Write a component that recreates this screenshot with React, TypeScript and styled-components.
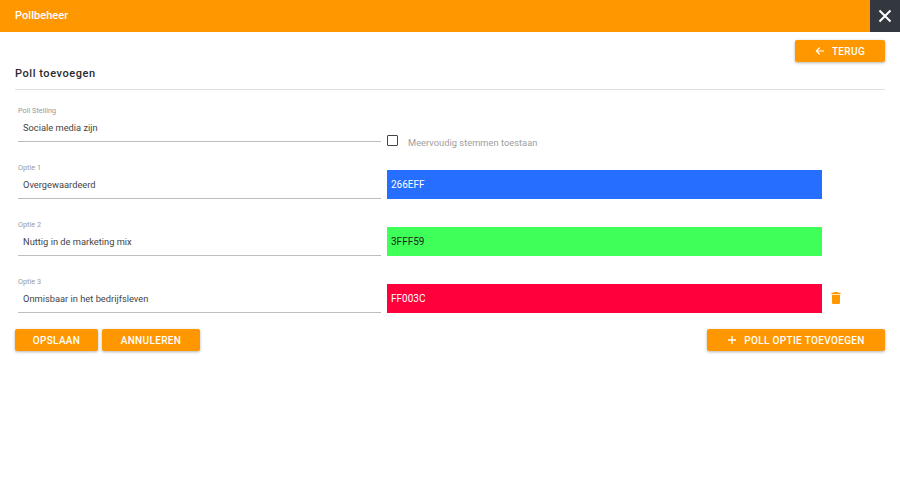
import React from "react";
import styled, { createGlobalStyle } from "styled-components";

const ORANGE = "#ff9800";

const OPTIONS = [
  { label: "Optie 1", value: "Overgewaardeerd", color: "#266EFF", ink: "#fff", hex: "266EFF" },
  { label: "Optie 2", value: "Nuttig in de marketing mix", color: "#3FFF59", ink: "#222", hex: "3FFF59" },
  { label: "Optie 3", value: "Onmisbaar in het bedrijfsleven", color: "#FF003C", ink: "#fff", hex: "FF003C", removable: true },
];

const GlobalStyle = createGlobalStyle`
  html, body {
    margin: 0;
    padding: 0;
    background: #fff;
    font-family: Roboto, "Liberation Sans", sans-serif;
  }
`;

const Page = styled.div`
  width: 900px;
  height: 497px;
  overflow: hidden;
`;

const TitleBar = styled.header`
  height: 32px;
  background: ${ORANGE};
  display: flex;
  align-items: center;
  justify-content: space-between;
`;

const AppTitle = styled.h1`
  margin: 0 0 1px 15px;
  font-size: 11px;
  font-weight: 500;
  letter-spacing: 0.05px;
  color: #fff;
`;

const CloseButton = styled.button`
  width: 30px;
  height: 32px;
  padding: 0;
  border: 0;
  background: #333840;
  display: flex;
  align-items: center;
  justify-content: center;
`;

const Content = styled.main`
  padding: 8px 15px 0;
`;

const TopActions = styled.div`
  display: flex;
  justify-content: flex-end;
`;

const Button = styled.button<{ $width: number }>`
  width: ${(p) => p.$width}px;
  height: 22px;
  padding: 0;
  border: 0;
  border-radius: 2px;
  background: ${ORANGE};
  color: #fff;
  font-family: inherit;
  font-size: 10px;
  font-weight: 500;
  letter-spacing: 0.35px;
  display: flex;
  align-items: center;
  justify-content: center;
  gap: 7px;
  box-shadow: 0 1px 3px rgba(0, 0, 0, 0.3);
`;

const Heading = styled.h2`
  margin: 4px 0 0;
  height: 23px;
  font-size: 11px;
  font-weight: 500;
  letter-spacing: 0.55px;
  line-height: 15px;
  color: #2b2b2b;
  border-bottom: 1px solid #e0e0e0;
`;

const Form = styled.section`
  display: flex;
  flex-direction: column;
  gap: 20px;
  padding-top: 15px;
`;

const Row = styled.div`
  display: flex;
  align-items: flex-end;
`;

const Field = styled.div`
  width: 363px;
  height: 35px;
  margin-left: 3px;
  padding-top: 1px;
  border-bottom: 1px solid #bdbdbd;
`;

const FieldLabel = styled.div`
  font-size: 7.3px;
  line-height: 9px;
  color: #9a9a9a;
`;

const FieldValue = styled.div`
  margin: 7px 0 0 5px;
  font-size: 9.3px;
  line-height: 12px;
  color: #444;
`;

const ColorSwatch = styled.div<{ $bg: string; $ink: string }>`
  width: 431px;
  height: 29px;
  padding-left: 4px;
  margin-left: 6px;
  background: ${(p) => p.$bg};
  color: ${(p) => p.$ink};
  font-size: 10px;
  line-height: 29px;
`;

const TrashButton = styled.button`
  border: 0;
  padding: 0;
  margin: 0 0 7px 6px;
  width: 16px;
  height: 16px;
  background: none;
  display: flex;
  align-items: center;
  justify-content: center;
`;

const CheckLabel = styled.label`
  margin: 0 0 -12px 6px;
  height: 24px;
  display: flex;
  align-items: center;
  gap: 10px;
  font-size: 9.3px;
  letter-spacing: 0.02px;
  color: #9e9e9e;
`;

const CheckBox = styled.span`
  display: block;
  width: 9px;
  height: 9px;
  border: 1px solid #444;
  border-radius: 1px;
  margin-bottom: 3px;
`;

const Footer = styled.div`
  display: flex;
  align-items: center;
  gap: 4px;
  margin-top: 16px;
`;

const Spacer = styled.div`
  flex: 1;
`;

export default function App() {
  return (
    <Page>
      <GlobalStyle />
      <TitleBar>
        <AppTitle>Pollbeheer</AppTitle>
        <CloseButton aria-label="Sluiten">
          <svg width="14" height="14" viewBox="0 0 14 14">
            <path d="M1.5 1.5l11 11M12.5 1.5l-11 11" stroke="#fff" strokeWidth="2" fill="none" />
          </svg>
        </CloseButton>
      </TitleBar>
      <Content>
        <TopActions>
          <Button $width={90}>
            <svg width="10" height="10" viewBox="0 0 10 10">
              <path d="M9 5H1.6M4.8 1.5L1.3 5l3.5 3.5" stroke="#fff" strokeWidth="1.1" fill="none" />
            </svg>
            TERUG
          </Button>
        </TopActions>
        <Heading>Poll toevoegen</Heading>
        <Form>
          <Row>
            <Field>
              <FieldLabel>Poll Stelling</FieldLabel>
              <FieldValue>Sociale media zijn</FieldValue>
            </Field>
            <CheckLabel>
              <CheckBox />
              Meervoudig stemmen toestaan
            </CheckLabel>
          </Row>
          {OPTIONS.map((o) => (
            <Row key={o.label}>
              <Field>
                <FieldLabel>{o.label}</FieldLabel>
                <FieldValue>{o.value}</FieldValue>
              </Field>
              <ColorSwatch $bg={o.color} $ink={o.ink}>{o.hex}</ColorSwatch>
              {o.removable && (
                <TrashButton aria-label="Verwijderen">
                  <svg width="16" height="16" viewBox="0 0 24 24">
                    <path fill={ORANGE} d="M6 19c0 1.1.9 2 2 2h8c1.1 0 2-.9 2-2V7H6v12zM19 4h-3.500l-1-1h-5l-1 1H5v2h14V4z" />
                  </svg>
                </TrashButton>
              )}
            </Row>
          ))}
        </Form>
        <Footer>
          <Button $width={83}>OPSLAAN</Button>
          <Button $width={98}>ANNULEREN</Button>
          <Spacer />
          <Button $width={178}>
            <svg width="10" height="10" viewBox="0 0 10 10">
              <path d="M5 1v8M1 5h8" stroke="#fff" strokeWidth="1.3" fill="none" />
            </svg>
            POLL OPTIE TOEVOEGEN
          </Button>
        </Footer>
      </Content>
    </Page>
  );
}
